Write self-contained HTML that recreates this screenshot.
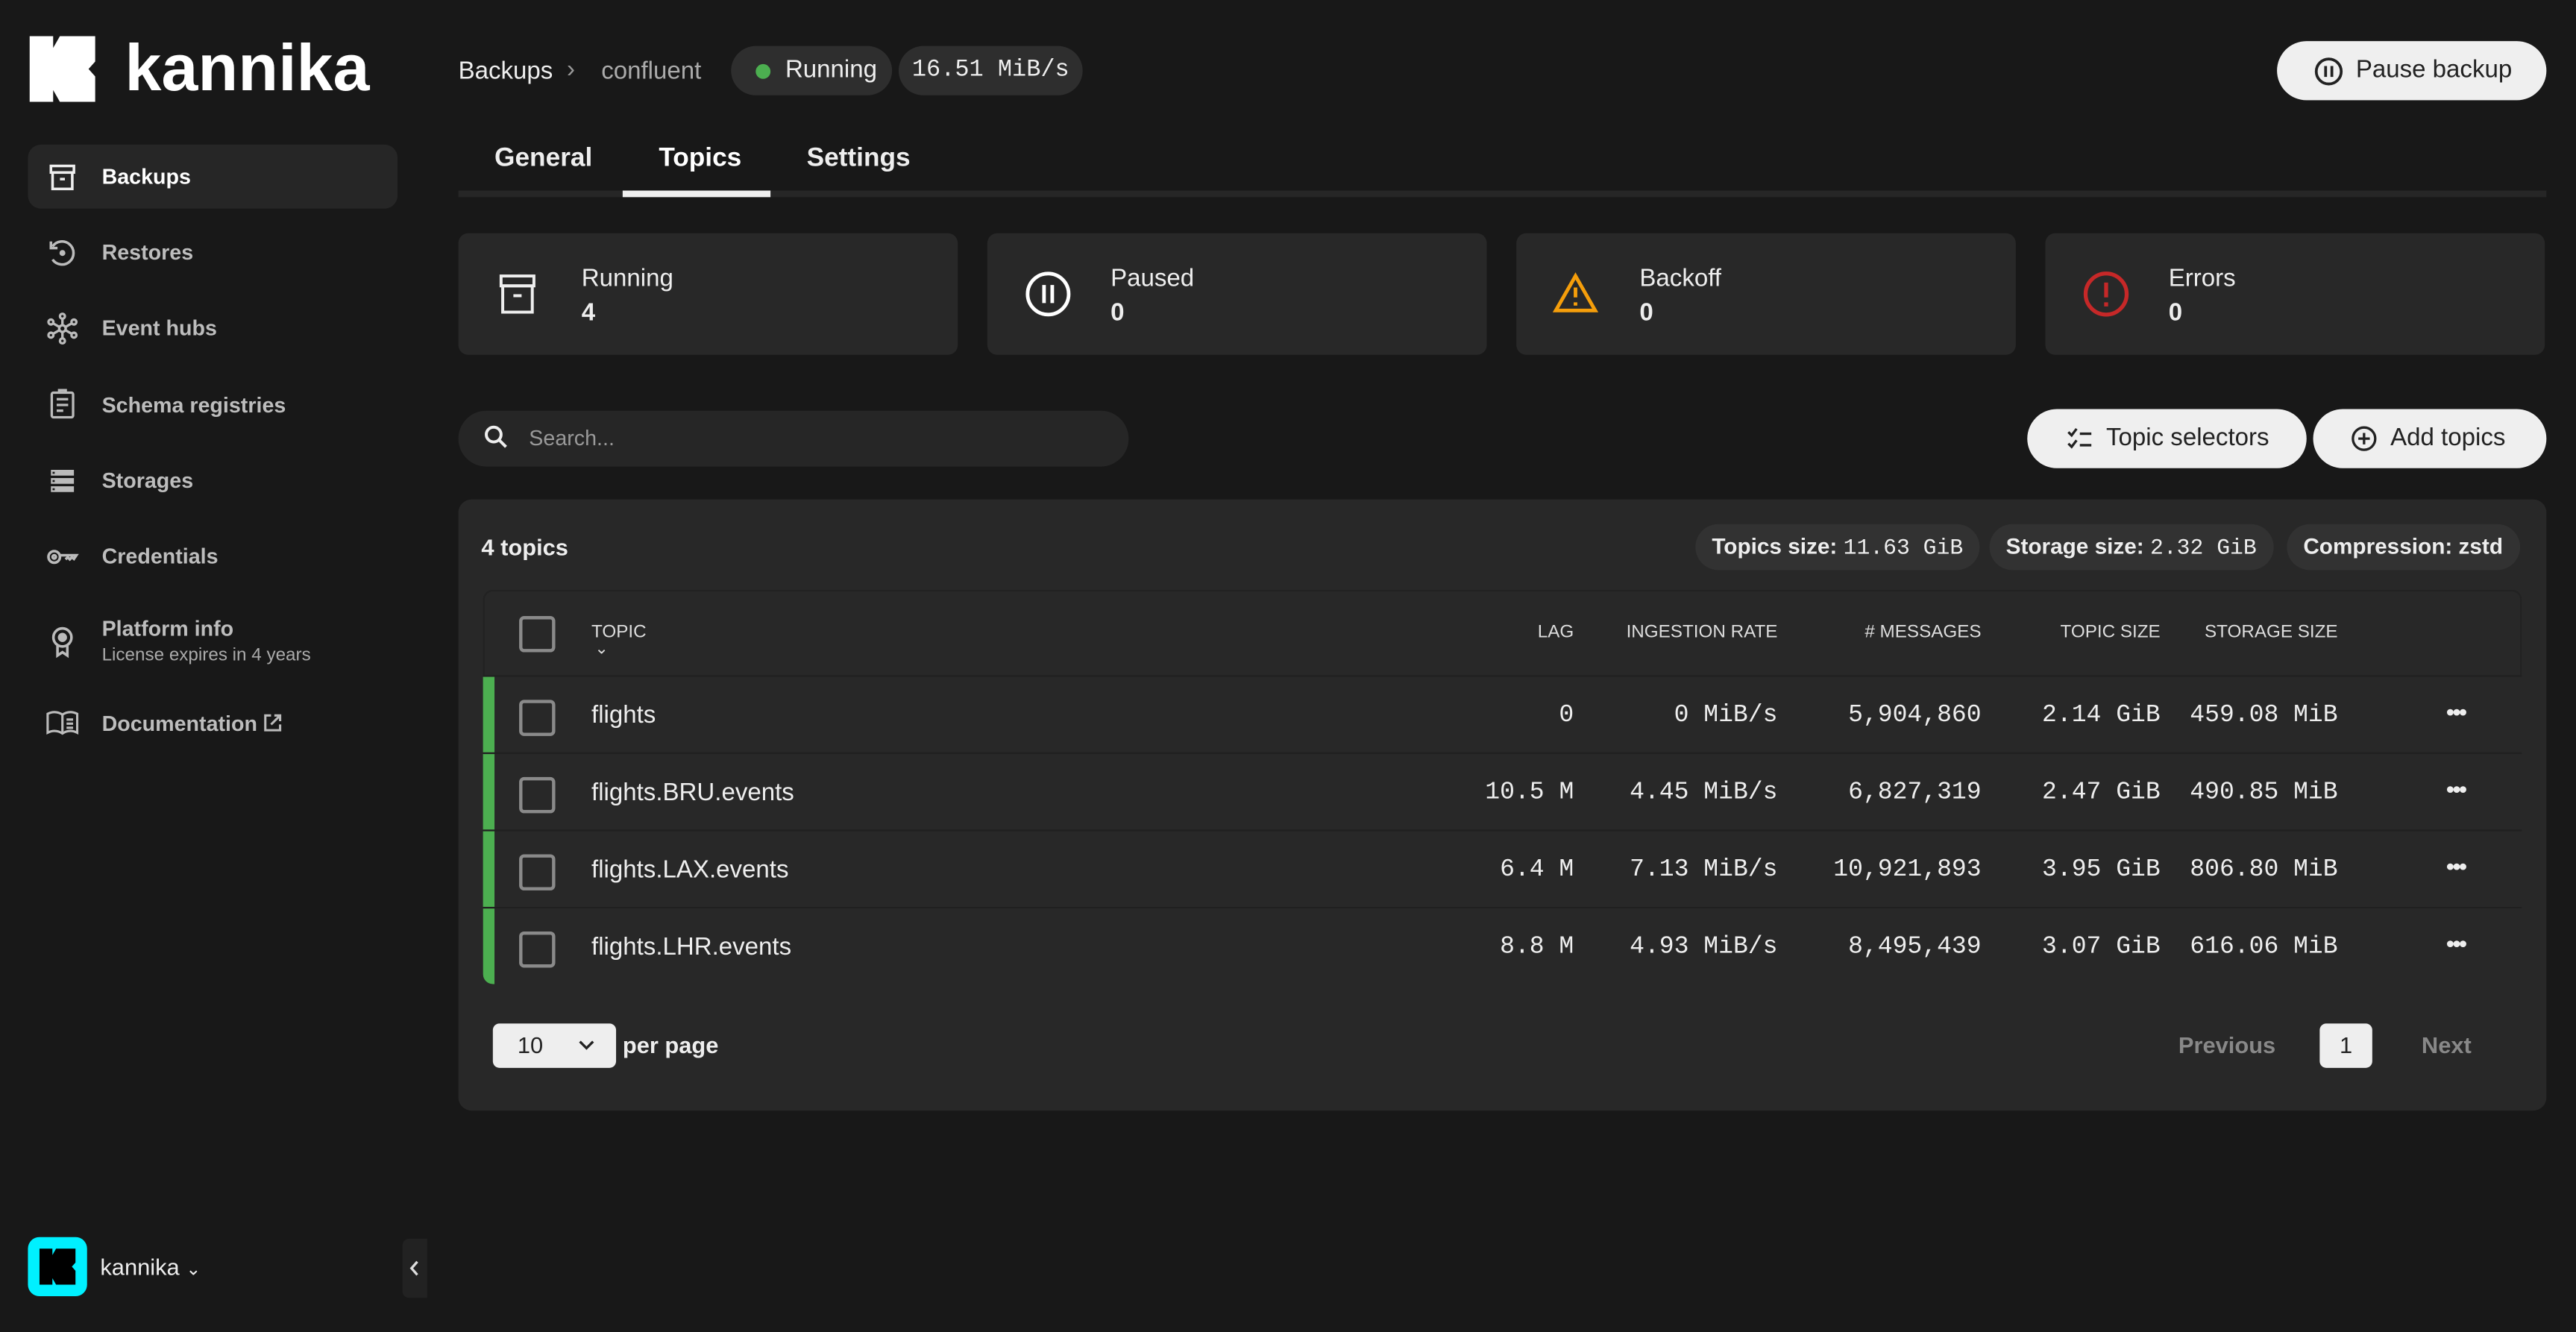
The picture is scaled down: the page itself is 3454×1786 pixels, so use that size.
<!DOCTYPE html>
<html><head><meta charset="utf-8">
<style>
html,body{margin:0;padding:0;background:#181818;width:3454px;height:1786px;overflow:hidden}
#s{position:absolute;left:0;top:0;width:1568px;height:811px;transform:scale(2.2028);transform-origin:0 0;font-family:"Liberation Sans",sans-serif;color:#eee;background:#181818}
.a{position:absolute}
.nav{position:absolute;left:62px;font-size:13px;font-weight:bold;color:#bdbdbd}
.ic{position:absolute;left:28px}
.pill{position:absolute;top:28px;background:#2e2e2e;border-radius:15px;height:30px;line-height:30px;font-size:15px}
.mono{font-family:"Liberation Mono",monospace}
.card{position:absolute;top:142px;width:304px;height:74px;background:#282828;border-radius:6px}
.card .l{position:absolute;left:75px;top:19px;font-size:15px}
.card .v{position:absolute;left:75px;top:40px;font-size:15px;font-weight:bold}
.btn{position:absolute;background:#efefef;color:#222;border-radius:18px;height:36px;line-height:36px;font-size:15px}
.chip{position:absolute;top:319px;height:28px;line-height:28px;background:#323232;border-radius:14px;font-size:13.5px;font-weight:bold;padding:0 10px}
.chip span{font-weight:normal;font-family:"Liberation Mono",monospace}
.row{position:absolute;left:294px;width:1241px;height:46px;background:#282828;border-top:1px solid #202020}
.bar{position:absolute;left:0;top:0;width:7px;height:100%;background:#4caf50}
.cb{position:absolute;left:22px;width:18px;height:18px;border:2px solid #8a8a8a;border-radius:3px}
.tn{position:absolute;left:66px;font-size:15px}
.c{position:absolute;text-align:right;font-family:"Liberation Mono",monospace;font-size:15px;white-space:nowrap}
.h{position:absolute;text-align:right;font-size:11px;color:#ddd;white-space:nowrap}
.dots{position:absolute;left:1195px;font-size:14px;font-weight:bold;letter-spacing:-1px}
</style></head><body><div id="s">

<!-- logo -->
<svg class="a" style="left:18px;top:22px" width="40" height="40" viewBox="0 0 39 39"><path d="M0 0H14V7L18 0H39V15L35 19.5L39 24V39H18L14 32V39H0Z" fill="#fff"/></svg>
<div class="a" style="left:76px;top:20px;font-size:40px;font-weight:bold;color:#fff">kannika</div>

<!-- nav -->
<div class="a" style="left:17px;top:88px;width:225px;height:39px;background:#262626;border-radius:8px"></div>
<svg class="ic" style="top:98px" width="20" height="20" viewBox="0 0 20 20" fill="none" stroke="#eee" stroke-width="1.6"><rect x="3" y="3" width="14" height="4"/><rect x="4" y="7" width="12" height="10"/><path d="M8.5 11h3"/></svg>
<div class="nav" style="top:100px;color:#fff">Backups</div>
<svg class="ic" style="top:144px" width="20" height="20" viewBox="0 0 20 20" fill="none" stroke="#bbb" stroke-width="1.6"><path d="M4 6A7 7 0 1 1 4 14"/><path d="M3 3v4h4"/><circle cx="10" cy="10" r="1" fill="#bbb"/></svg>
<div class="nav" style="top:146px">Restores</div>
<svg class="ic" style="top:190px" width="20" height="20" viewBox="0 0 20 20" fill="none" stroke="#bbb" stroke-width="1.5"><circle cx="10" cy="10" r="2"/><circle cx="10" cy="2.5" r="1.5"/><circle cx="10" cy="17.5" r="1.5"/><circle cx="3" cy="6" r="1.5"/><circle cx="17" cy="6" r="1.5"/><circle cx="3" cy="14" r="1.5"/><circle cx="17" cy="14" r="1.5"/><path d="M10 4v4M10 12v4M4.3 6.8l4 2.3M15.7 6.8l-4 2.3M4.3 13.2l4-2.3M15.7 13.2l-4-2.3"/></svg>
<div class="nav" style="top:192px">Event hubs</div>
<svg class="ic" style="top:236px" width="20" height="20" viewBox="0 0 20 20" fill="none" stroke="#bbb" stroke-width="1.5"><rect x="3.5" y="3" width="13" height="15" rx="1"/><path d="M8 3V1.5h4V3M6.5 7h7M6.5 10.5h7M6.5 14h4"/></svg>
<div class="nav" style="top:239px">Schema registries</div>
<svg class="ic" style="top:283px" width="20" height="20" viewBox="0 0 20 20"><rect x="3" y="3" width="14" height="3.5" fill="#bbb"/><rect x="3" y="8" width="14" height="3.5" fill="#bbb"/><rect x="3" y="13" width="14" height="3.5" fill="#bbb"/><rect x="4" y="4.2" width="1.3" height="1.2" fill="#181818"/><rect x="4" y="9.2" width="1.3" height="1.2" fill="#181818"/><rect x="4" y="14.2" width="1.3" height="1.2" fill="#181818"/></svg>
<div class="nav" style="top:285px">Storages</div>
<svg class="ic" style="top:329px" width="20" height="20" viewBox="0 0 20 20" fill="none" stroke="#bbb" stroke-width="1.6"><circle cx="5" cy="10" r="3.5"/><circle cx="5" cy="10" r="1"/><path d="M8.5 9h10l-1.5 2.2-1.2-1-1.3 1.3-1.3-1.3-1.3 1.3"/></svg>
<div class="nav" style="top:331px">Credentials</div>
<svg class="ic" style="top:380px" width="20" height="22" viewBox="0 0 20 22" fill="none" stroke="#bbb" stroke-width="1.6"><circle cx="10" cy="8" r="5.5"/><circle cx="10" cy="8" r="2" fill="#bbb"/><path d="M7 13v6l3-2 3 2v-6"/></svg>
<div class="nav" style="top:375px">Platform info</div>
<div class="a" style="left:62px;top:393px;font-size:11px;color:#aaa">License expires in 4 years</div>
<svg class="ic" style="top:431px" width="20" height="18" viewBox="0 0 20 18" fill="none" stroke="#bbb" stroke-width="1.4"><path d="M1 3.5C4 2 7 2 10 4c3-2 6-2 9-.5V15c-3-1.5-6-1.5-9 .5-3-2-6-2-9-.5Z"/><path d="M10 4v11.5M12.5 7h4M12.5 9.5h4M12.5 12h4"/></svg>
<div class="nav" style="top:433px">Documentation <svg width="12" height="12" viewBox="0 0 12 12" fill="none" stroke="#bbb" stroke-width="1.4" style="vertical-align:-1px"><path d="M5 1.5H1.5v9h9V7M7 1.5h3.5V5M10.5 1.5 5 7"/></svg></div>

<!-- bottom -->
<div class="a" style="left:17px;top:753px;width:36px;height:36px;background:#00f0ff;border-radius:7px"></div>
<svg class="a" style="left:24px;top:760px" width="22" height="22" viewBox="0 0 39 39"><path d="M0 0H14V7L18 0H39V15L35 19.5L39 24V39H18L14 32V39H0Z" fill="#000"/></svg>
<div class="a" style="left:61px;top:763px;font-size:14px;color:#eee">kannika <span style="font-size:11px">&#8964;</span></div>
<div class="a" style="left:245px;top:754px;width:15px;height:36px;background:#222;border-radius:4px 0 0 4px"></div>
<svg class="a" style="left:248px;top:766px" width="9" height="12" viewBox="0 0 9 12" fill="none" stroke="#ddd" stroke-width="1.5"><path d="M6 2 2.5 6 6 10"/></svg>

<!-- header -->
<div class="a" style="left:279px;top:35px;font-size:15px">Backups</div>
<div class="a" style="left:345px;top:34px;font-size:15px;color:#999">&#8250;</div>
<div class="a" style="left:366px;top:35px;font-size:15px;color:#aaa">confluent</div>
<div class="pill" style="left:445px;width:98px"><span style="position:absolute;left:15px;top:11px;width:9px;height:9px;border-radius:50%;background:#4caf50"></span><span style="position:absolute;left:33px">Running</span></div>
<div class="pill mono" style="left:547px;width:112px;text-align:center;font-size:14.5px">16.51 MiB/s</div>
<div class="btn" style="left:1386px;top:25px;width:164px"><svg style="position:absolute;left:22px;top:9px" width="19" height="19" viewBox="0 0 20 20" fill="none" stroke="#222" stroke-width="1.8"><circle cx="10" cy="10" r="8"/><path d="M8 6.5v7M12 6.5v7"/></svg><span style="position:absolute;left:48px">Pause backup</span></div>

<!-- tabs -->
<div class="a" style="left:301px;top:88px;font-size:16px;font-weight:bold;color:#eee">General</div>
<div class="a" style="left:401px;top:88px;font-size:16px;font-weight:bold;color:#fff">Topics</div>
<div class="a" style="left:491px;top:88px;font-size:16px;font-weight:bold;color:#eee">Settings</div>
<div class="a" style="left:279px;top:116px;width:1271px;height:4px;background:#262626"></div>
<div class="a" style="left:379px;top:116px;width:90px;height:4px;background:#f0f0f0"></div>

<!-- cards -->
<div class="card" style="left:279px"><svg style="position:absolute;left:24px;top:24px" width="24" height="26" viewBox="0 0 24 26" fill="none" stroke="#eee" stroke-width="1.8"><rect x="2" y="2" width="20" height="6"/><rect x="3" y="8" width="18" height="16"/><path d="M9.5 14h5"/></svg><div class="l">Running</div><div class="v">4</div></div>
<div class="card" style="left:601px"><svg style="position:absolute;left:22px;top:22px" width="30" height="30" viewBox="0 0 30 30" fill="none" stroke="#fff" stroke-width="2.2"><circle cx="15" cy="15" r="12.5"/><path d="M12.5 9.5v11M17.5 9.5v11"/></svg><div class="l">Paused</div><div class="v">0</div></div>
<div class="card" style="left:923px"><svg style="position:absolute;left:22px;top:23px" width="28" height="26" viewBox="0 0 28 26" fill="none" stroke="#f59e0b" stroke-width="2.2"><path d="M14 3 26 24H2Z"/><path d="M14 10v6M14 19v2"/></svg><div class="l">Backoff</div><div class="v">0</div></div>
<div class="card" style="left:1245px"><svg style="position:absolute;left:22px;top:22px" width="30" height="30" viewBox="0 0 30 30" fill="none" stroke="#c62828" stroke-width="2.4"><circle cx="15" cy="15" r="12.5"/><path d="M15 8v9M15 20v2.5"/></svg><div class="l">Errors</div><div class="v">0</div></div>

<!-- search & buttons -->
<div class="a" style="left:279px;top:250px;width:408px;height:34px;background:#262626;border-radius:17px"></div>
<svg class="a" style="left:294px;top:258px" width="16" height="16" viewBox="0 0 16 16" fill="none" stroke="#eee" stroke-width="1.8"><circle cx="6.5" cy="6.5" r="4.5"/><path d="M10 10l4 4"/></svg>
<div class="a" style="left:322px;top:259px;font-size:13px;color:#999">Search...</div>
<div class="btn" style="left:1234px;top:249px;width:170px"><svg style="position:absolute;left:24px;top:11px" width="16" height="14" viewBox="0 0 16 14" fill="none" stroke="#222" stroke-width="1.5"><path d="M1 3l2 2 3-4M1 10l2 2 3-4M8 4h7M8 11h7"/></svg><span style="position:absolute;left:48px">Topic selectors</span></div>
<div class="btn" style="left:1408px;top:249px;width:142px"><svg style="position:absolute;left:23px;top:10px" width="16" height="16" viewBox="0 0 16 16" fill="none" stroke="#222" stroke-width="1.5"><circle cx="8" cy="8" r="6.8"/><path d="M8 4.5v7M4.5 8h7"/></svg><span style="position:absolute;left:47px">Add topics</span></div>

<!-- panel -->
<div class="a" style="left:279px;top:304px;width:1271px;height:372px;background:#282828;border-radius:8px"></div>
<div class="a" style="left:293px;top:325px;font-size:14px;font-weight:bold">4 topics</div>
<div class="chip" style="left:1032px">Topics size: <span>11.63 GiB</span></div>
<div class="chip" style="left:1211px">Storage size: <span>2.32 GiB</span></div>
<div class="chip" style="left:1392px">Compression: zstd</div>

<div class="a" style="left:294px;top:359px;width:1241px;height:52px;background:#282828;border:1px solid #222;border-bottom:none;border-radius:6px 6px 0 0;box-sizing:border-box"></div>
<div class="cb" style="left:316px;top:375px"></div>
<div class="h" style="left:360px;top:379px;text-align:left">TOPIC</div>
<div class="a" style="left:362px;top:390px;font-size:10px;color:#ddd">&#8964;</div>
<div class="h" style="right:610px;top:379px">LAG</div>
<div class="h" style="right:486px;top:379px">INGESTION RATE</div>
<div class="h" style="right:362px;top:379px"># MESSAGES</div>
<div class="h" style="right:253px;top:379px">TOPIC SIZE</div>
<div class="h" style="right:145px;top:379px">STORAGE SIZE</div>

<div class="row" style="top:411px"><div class="bar"></div><div class="cb" style="top:14px"></div><div class="tn" style="top:15px">flights</div><div class="c" style="right:577px;top:15px">0</div><div class="c" style="right:453px;top:15px">0 MiB/s</div><div class="c" style="right:329px;top:15px">5,904,860</div><div class="c" style="right:220px;top:15px">2.14 GiB</div><div class="c" style="right:112px;top:15px">459.08 MiB</div><div class="dots" style="top:13px">&#8226;&#8226;&#8226;</div></div>
<div class="row" style="top:458px"><div class="bar"></div><div class="cb" style="top:14px"></div><div class="tn" style="top:15px">flights.BRU.events</div><div class="c" style="right:577px;top:15px">10.5 M</div><div class="c" style="right:453px;top:15px">4.45 MiB/s</div><div class="c" style="right:329px;top:15px">6,827,319</div><div class="c" style="right:220px;top:15px">2.47 GiB</div><div class="c" style="right:112px;top:15px">490.85 MiB</div><div class="dots" style="top:13px">&#8226;&#8226;&#8226;</div></div>
<div class="row" style="top:505px"><div class="bar"></div><div class="cb" style="top:14px"></div><div class="tn" style="top:15px">flights.LAX.events</div><div class="c" style="right:577px;top:15px">6.4 M</div><div class="c" style="right:453px;top:15px">7.13 MiB/s</div><div class="c" style="right:329px;top:15px">10,921,893</div><div class="c" style="right:220px;top:15px">3.95 GiB</div><div class="c" style="right:112px;top:15px">806.80 MiB</div><div class="dots" style="top:13px">&#8226;&#8226;&#8226;</div></div>
<div class="row" style="top:552px;border-radius:0 0 6px 6px;overflow:hidden"><div class="bar" style="border-radius:0 0 0 6px"></div><div class="cb" style="top:14px"></div><div class="tn" style="top:15px">flights.LHR.events</div><div class="c" style="right:577px;top:15px">8.8 M</div><div class="c" style="right:453px;top:15px">4.93 MiB/s</div><div class="c" style="right:329px;top:15px">8,495,439</div><div class="c" style="right:220px;top:15px">3.07 GiB</div><div class="c" style="right:112px;top:15px">616.06 MiB</div><div class="dots" style="top:13px">&#8226;&#8226;&#8226;</div></div>

<!-- pagination -->
<div class="a" style="left:300px;top:623px;width:75px;height:27px;background:#eee;border-radius:4px;color:#222;font-size:14px"><span style="position:absolute;left:15px;top:5px">10</span><svg style="position:absolute;left:52px;top:10px" width="10" height="7" viewBox="0 0 10 7" fill="none" stroke="#222" stroke-width="1.5"><path d="M1 1l4 4 4-4"/></svg></div>
<div class="a" style="left:379px;top:628px;font-size:14px;font-weight:bold">per page</div>
<div class="a" style="left:1326px;top:628px;font-size:14px;font-weight:bold;color:#888">Previous</div>
<div class="a" style="left:1412px;top:623px;width:32px;height:27px;background:#eee;border-radius:4px;color:#222;font-size:14px;text-align:center;line-height:27px">1</div>
<div class="a" style="left:1474px;top:628px;font-size:14px;font-weight:bold;color:#888">Next</div>

</div></body></html>
